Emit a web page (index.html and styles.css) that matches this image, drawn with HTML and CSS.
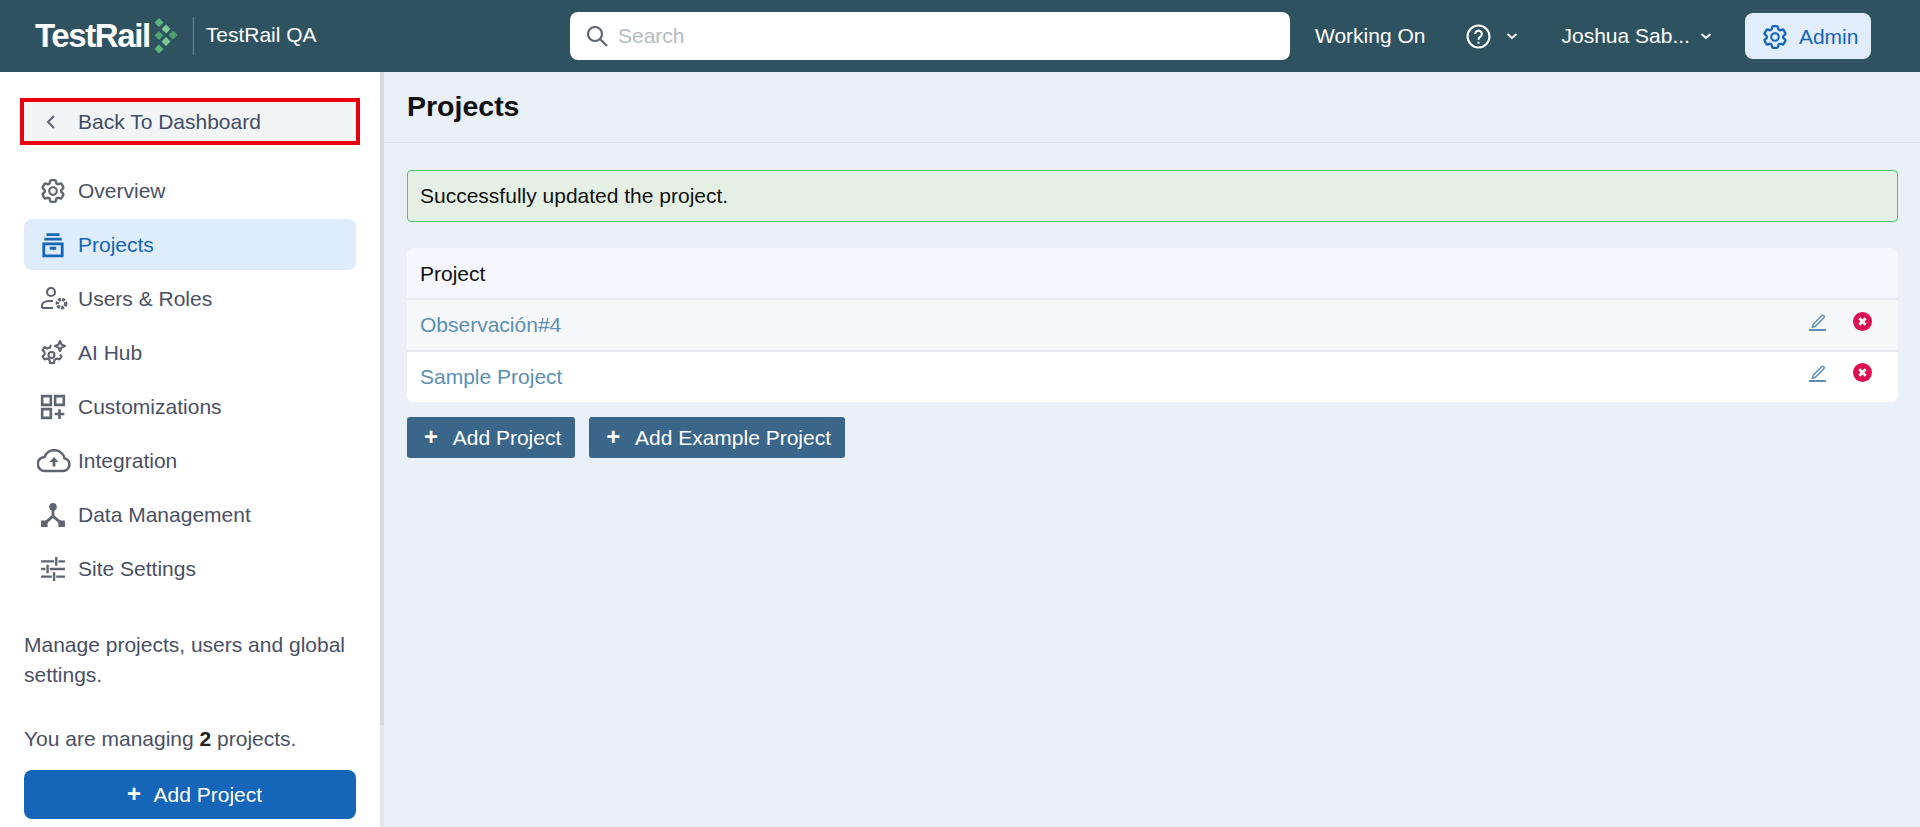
FILE: index.html
```html
<!DOCTYPE html>
<html lang="en">
<head>
    <meta charset="UTF-8">
    <title>Projects - TestRail</title>
    <link rel="stylesheet" href="styles.css">
</head>
<body>
    <header class="topbar">
        <div class="brand">
            <span class="logo-text">TestRail</span>
            <svg class="logo-mark" viewBox="0 0 24 36" width="24" height="36">
                <g fill="#5cb578">
                    <path d="M5 0l4.500 4.500L5 9 .5 4.500z"/>
                    <path d="M12 6.500l4.500 4.500-4.500 4.500L7.500 11z" fill="#7cc795"/>
                    <path d="M5 13l4.500 4.500L5 22 .5 17.500z" fill="#4ea26c"/>
                    <path d="M19 12.500l4.500 4.500-4.500 4.500-4.500-4.500z" fill="#4ea26c"/>
                    <path d="M12 19l4.500 4.500-4.500 4.500-4.500-4.500z" fill="#7cc795"/>
                    <path d="M5 26.500l4.500 4.500L5 35.500.5 31z"/>
                </g>
            </svg>
            <span class="brand-sep"></span>
            <span class="brand-name">TestRail QA</span>
        </div>
        <div class="search">
            <svg viewBox="0 0 24 24" width="24" height="24" fill="none" stroke="#5f6570" stroke-width="2.200"><circle cx="10" cy="10" r="7"/><path d="M15.500 15.500L22 22"/></svg>
            <span>Search</span>
        </div>
        <nav class="topnav">
            <span class="working">Working On</span>
            <span class="help">
                <svg viewBox="0 0 24 24" width="25" height="25" fill="none" stroke="#fff" stroke-width="2"><circle cx="12" cy="12" r="10.500"/><path d="M8.800 9.500a3.200 3.200 0 1 1 5 2.700c-1.200.8-1.800 1.400-1.800 2.800"/><path d="M12 17v1.800"/></svg>
                <svg class="chev" viewBox="0 0 12 12" width="12" height="12" fill="none" stroke="#fff" stroke-width="1.800"><path d="M1.500 4l4.500 4 4.500-4"/></svg>
            </span>
            <span class="user">
                Joshua Sab...
                <svg class="chev" viewBox="0 0 12 12" width="12" height="12" fill="none" stroke="#fff" stroke-width="1.800"><path d="M1.500 4l4.500 4 4.500-4"/></svg>
            </span>
            <span class="admin">
                <svg viewBox="0 0 24 24" width="26" height="26" fill="none" stroke="#1565b8" stroke-width="1.900"><use href="#gear"/></svg>
                Admin
            </span>
        </nav>
    </header>

    <svg class="defs" width="0" height="0">
        <symbol id="gear" viewBox="0 0 24 24">
            <path d="M9.594 3.940c.09-.542.56-.94 1.110-.94h2.593c.55 0 1.020.398 1.110.94l.213 1.281c.063.374.313.686.645.870.074.040.147.083.22.127.325.196.72.257 1.075.124l1.217-.456a1.125 1.125 0 0 1 1.370.49l1.296 2.247a1.125 1.125 0 0 1-.26 1.431l-1.003.827c-.293.241-.438.613-.43.992a7.723 7.723 0 0 1 0 .255c-.008.378.137.75.43.991l1.004.827c.424.35.534.955.26 1.430l-1.298 2.247a1.125 1.125 0 0 1-1.369.491l-1.217-.456c-.355-.133-.75-.072-1.076.124a6.470 6.470 0 0 1-.22.128c-.331.183-.581.495-.644.869l-.213 1.281c-.09.543-.56.94-1.110.94h-2.594c-.55 0-1.019-.398-1.110-.94l-.213-1.281c-.062-.374-.312-.686-.644-.87a6.520 6.520 0 0 1-.22-.127c-.325-.196-.72-.257-1.076-.124l-1.217.456a1.125 1.125 0 0 1-1.369-.49l-1.297-2.247a1.125 1.125 0 0 1 .26-1.431l1.004-.827c.292-.24.437-.613.43-.991a6.932 6.932 0 0 1 0-.255c.007-.38-.138-.751-.43-.992l-1.004-.827a1.125 1.125 0 0 1-.26-1.430l1.297-2.247a1.125 1.125 0 0 1 1.370-.491l1.216.456c.356.133.751.072 1.076-.124.072-.044.146-.086.22-.128.332-.183.582-.495.644-.869l.214-1.280z" transform="translate(-1.400 -1.400) scale(1.117)"/>
            <circle cx="12" cy="12" r="3.500"/>
        </symbol>
    </svg>

    <div class="layout">
        <aside class="sidebar">
            <a class="back">
                <svg viewBox="0 0 12 16" width="12" height="16" fill="none" stroke="#5f6b7a" stroke-width="2.200"><path d="M9 2L3 8l6 6"/></svg>
                <span>Back To Dashboard</span>
            </a>
            <ul class="menu">
                <li>
                    <svg viewBox="0 0 24 24" width="26" height="26" fill="none" stroke="#5f6570" stroke-width="2"><use href="#gear"/></svg>
                    Overview
                </li>
                <li class="active">
                    <svg viewBox="0 0 24 24" width="26" height="26" fill="none" stroke="#1565b8" stroke-width="2.600"><path d="M6 2.500h12M4 6.500h16M3.500 11h17v11h-17zM9 15h6"/></svg>
                    Projects
                </li>
                <li>
                    <svg class="users-icon" viewBox="0 0 28 24" width="28" height="24" fill="none" stroke="#5f6570" stroke-width="2.200"><circle cx="11" cy="5" r="4"/><path d="M2 21v-2.500c0-3 4-4.500 8-4.500h3M2 21h11"/><circle cx="21.500" cy="16.500" r="4.200" stroke-dasharray="2.800 1.200" stroke-width="3.400"/></svg>
                    Users &amp; Roles
                </li>
                <li>
                    <svg viewBox="0 0 26 26" width="26" height="26" fill="none" stroke="#5f6570" stroke-width="2.100" stroke-linejoin="round"><path d="M11 5l-1 2.500-3 1L4.500 7 2.500 10l2 2v2.500l-2 2 2 3 2.500-1 2.500 1.500.500 3h4l.5-3 2.500-1.500 2.500 1 2-3-1.500-2"/><circle cx="11.500" cy="15" r="3"/><path d="M20 1l1.500 3.500L25 6l-3.500 1.500L20 11l-1.500-3.500L15 6l3.500-1.500z"/></svg>
                    AI Hub
                </li>
                <li>
                    <svg viewBox="0 0 24 24" width="26" height="26" fill="none" stroke="#5f6570" stroke-width="2.400"><path d="M2 2h8v8H2zM14 2h8v8h-8zM2 14h8v8H2zM18 14v9M13.500 18.500h9"/></svg>
                    Customizations
                </li>
                <li>
                    <svg class="cloud-icon" viewBox="0 0 34 24" width="34" height="24" fill="none" stroke="#5f6570" stroke-width="2.600"><path d="M8 22h18a6.500 6.500 0 0 0 1.500-12.800A10.500 10.500 0 0 0 7.500 8 7 7 0 0 0 8 22z"/><path d="M17 17.500v-6" stroke-width="2.800"/><path d="M12.500 13L17 8l4.500 5z" fill="#5f6570" stroke="none"/></svg>
                    Integration
                </li>
                <li>
                    <svg viewBox="0 0 24 24" width="26" height="26" fill="#5f6570" stroke="#5f6570" stroke-width="2.600"><circle cx="12" cy="4.500" r="3.500" stroke="none"/><path d="M12 6v7M12 13l-8 7M12 13l8 7" fill="none"/><path d="M1 17h6v6H1zM17 17h6v6h-6z" stroke="none"/></svg>
                    Data Management
                </li>
                <li>
                    <svg viewBox="0 0 24 24" width="26" height="26" fill="none" stroke="#5f6570" stroke-width="2.200"><path d="M1 5h12M17 5h6M15 1v8M1 12h4M9 12h14M7 8v8M1 19h10M15 19h8M13 15v8"/></svg>
                    Site Settings
                </li>
            </ul>
            <p class="side-note">Manage projects, users and global settings.</p>
            <p class="side-count">You are managing <b>2</b> projects.</p>
            <button class="side-add"><span class="plus">+</span> Add Project</button>
        </aside>

        <main class="content">
            <div class="page-head"><h1>Projects</h1></div>
            <div class="page-body">
                <div class="alert">Successfully updated the project.</div>
                <div class="grid">
                    <div class="grid-head">Project</div>
                    <div class="grid-row odd">
                        <a>Observación#4</a>
                        <span class="actions">
                            <svg viewBox="0 0 18 18" width="19" height="19" fill="none" stroke="#5b8fb5" stroke-width="1.400"><path d="M5 11.500l-.8 2.800 2.800-.8 8-8a1.400 1.400 0 0 0-2-2z"/><path d="M1 17h16" stroke-width="1.800"/></svg>
                            <svg viewBox="0 0 18 18" width="19" height="19"><circle cx="9" cy="9" r="9" fill="#dc0f50"/><path d="M6 6l6 6M12 6l-6 6" stroke="#fff" stroke-width="2.600"/></svg>
                        </span>
                    </div>
                    <div class="grid-row">
                        <a>Sample Project</a>
                        <span class="actions">
                            <svg viewBox="0 0 18 18" width="19" height="19" fill="none" stroke="#5b8fb5" stroke-width="1.400"><path d="M5 11.500l-.8 2.800 2.800-.8 8-8a1.400 1.400 0 0 0-2-2z"/><path d="M1 17h16" stroke-width="1.800"/></svg>
                            <svg viewBox="0 0 18 18" width="19" height="19"><circle cx="9" cy="9" r="9" fill="#dc0f50"/><path d="M6 6l6 6M12 6l-6 6" stroke="#fff" stroke-width="2.600"/></svg>
                        </span>
                    </div>
                </div>
                <div class="buttons">
                    <button class="btn"><span class="plus">+</span> Add Project</button>
                    <button class="btn"><span class="plus">+</span> Add Example Project</button>
                </div>
            </div>
        </main>
    </div>
</body>
</html>
```

FILE: styles.css
```css
* {
    box-sizing: border-box;
}
html, body {
    height: 100%;
}
body {
    margin: 0;
    font-family: "Liberation Sans", Arial, sans-serif;
    font-size: 21px;
    background-color: #e9f0f7;
    color: #111;
    overflow: hidden;
}
.defs {
    position: absolute;
}
.topbar {
    height: 72px;
    background-color: #2f5261;
    display: flex;
    align-items: center;
    color: #fff;
}
.brand {
    width: 570px;
    padding-left: 35px;
    display: flex;
    align-items: center;
}
.logo-text {
    font-size: 33px;
    font-weight: bold;
    letter-spacing: -1.400px;
}
.logo-mark {
    margin-left: 4px;
}
.brand-sep {
    width: 1px;
    height: 38px;
    background-color: #6f8c99;
    margin: 0 12px 0 15px;
}
.brand-name {
    margin-top: -3px;
}
.search {
    width: 720px;
    height: 48px;
    background-color: #fff;
    border-radius: 8px;
    display: flex;
    align-items: center;
    gap: 9px;
    padding-left: 15px;
    color: #b4bac2;
}
.topnav {
    display: flex;
    align-items: center;
}
.working {
    margin-left: 25px;
}
.help {
    margin-left: 40px;
    display: flex;
    align-items: center;
    gap: 15px;
}
.user {
    margin-left: 44px;
    display: flex;
    align-items: center;
    gap: 10px;
}
.admin {
    margin-left: 33px;
    width: 126px;
    height: 46px;
    background-color: #e1edfb;
    border-radius: 8px;
    color: #1565b8;
    display: flex;
    align-items: center;
    gap: 11px;
    padding: 2px 0 0 17px;
}
.layout {
    display: flex;
    height: 755px;
}
.sidebar {
    position: relative;
    width: 384px;
    flex-shrink: 0;
    background-color: #fff;
    border-right: 4px solid #e3e8ed;
    padding: 26px 24px 0 24px;
    color: #4a5063;
}
/* scrollbar thumb on the sidebar edge */
.sidebar::after {
    content: "";
    position: absolute;
    top: 0;
    right: -4px;
    width: 4px;
    height: 653px;
    background-color: #d4dae0;
}
.back {
    display: flex;
    align-items: center;
    width: 340px;
    height: 47px;
    margin-left: -4px;
    padding-left: 21px;
    gap: 21px;
    background-color: #f2f5f5;
    border: 4px solid #e8000f;
    color: #434c68;
}
.menu {
    list-style: none;
    margin: 20px 0 0 0;
    padding: 0;
}
.menu li {
    height: 51px;
    margin-bottom: 3px;
    border-radius: 8px;
    display: flex;
    align-items: center;
    gap: 12px;
    padding-left: 16px;
    color: #4a5063;
}
.menu li svg {
    flex-shrink: 0;
}
.menu .users-icon {
    margin-right: -2px;
}
.menu .cloud-icon {
    margin: 0 -5px 0 -3px;
}
.menu .active {
    background-color: #dfecfb;
    color: #1565b8;
}
.side-note {
    margin: 36px 0 0 0;
    line-height: 30px;
}
.side-count {
    margin: 34px 0 0 0;
    line-height: 30px;
}
.side-count b {
    color: #222;
}
.side-add {
    display: block;
    margin-top: 16px;
    width: 332px;
    height: 49px;
    padding-left: 15px;
    border: none;
    border-radius: 8px;
    background-color: #1565b8;
    color: #fff;
    font-family: inherit;
    font-size: 21px;
}
.plus {
    font-weight: bold;
    font-size: 24px;
    line-height: 1;
    margin-right: 8px;
}
.content {
    flex: 1;
}
.page-head {
    height: 71px;
    border-bottom: 1px solid #dbe2e9;
    padding: 0 23px 2px 23px;
    display: flex;
    align-items: center;
}
h1 {
    margin: 0;
    font-size: 28.500px;
    font-weight: bold;
    color: #111;
}
.page-body {
    padding: 27px 22px 0 23px;
}
.alert {
    height: 52px;
    border: 1px solid #4fc36d;
    border-radius: 4px;
    background-color: #e5f0e4;
    padding-left: 12px;
    display: flex;
    align-items: center;
}
.grid {
    margin-top: 26px;
    border-radius: 6px;
    overflow: hidden;
}
.grid-head {
    height: 50px;
    background-color: #f5f7fd;
    padding: 2px 0 0 13px;
    display: flex;
    align-items: center;
}
.grid-row {
    height: 52px;
    border-top: 2px solid #e6e9ee;
    background-color: #fff;
    padding: 0 26px 0 13px;
    display: flex;
    align-items: center;
    justify-content: space-between;
    color: #5b8fb5;
}
.grid-row.odd {
    background-color: #f6f7f8;
}
.actions {
    display: flex;
    gap: 26px;
    margin-top: -8px;
}
.grid-row:last-child .actions {
    margin-top: -10px;
}
.buttons {
    margin-top: 15px;
    display: flex;
    gap: 14px;
}
.btn {
    height: 41px;
    padding: 0 14px 0 17px;
    border: none;
    border-radius: 3px;
    background-color: #3a668a;
    color: #fff;
    font-family: inherit;
    font-size: 21px;
}
.btn .plus {
    margin-right: 10px;
}
```
